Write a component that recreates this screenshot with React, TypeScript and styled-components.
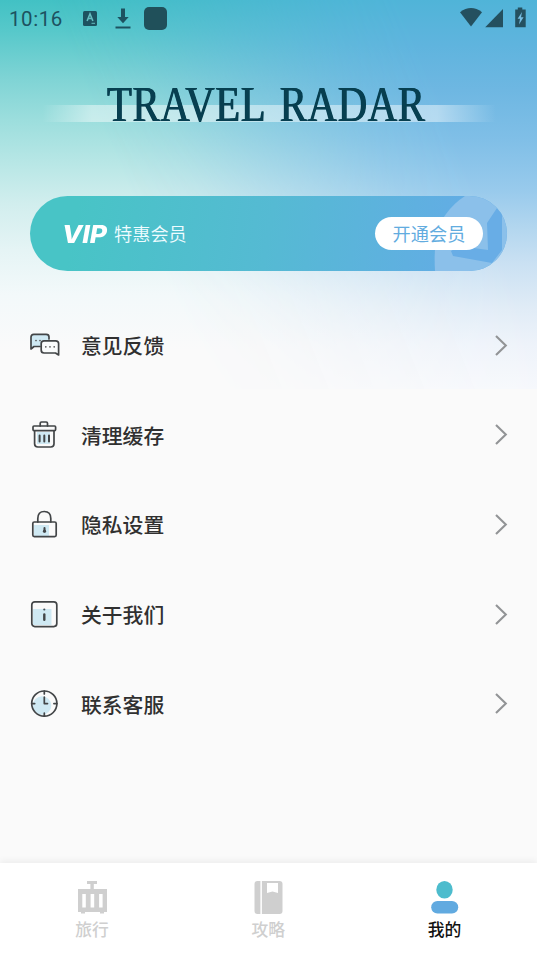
import React from "react";
import styled, { createGlobalStyle } from "styled-components";

const Global = createGlobalStyle`
  * { box-sizing: border-box; }
  html, body { margin: 0; padding: 0; background: #fafafa; }
  body { font-family: Roboto, "Noto Sans CJK SC", sans-serif; overflow: hidden; }
  svg { display: block; flex: none; }
`;

const Screen = styled.div`
  position: relative;
  isolation: isolate;
  width: 537px;
  height: 956px;
  display: flex;
  flex-direction: column;
  background: #fafafa;
  overflow: hidden;
`;

const Sky = styled.div`
  position: absolute;
  z-index: -1;
  inset: 0 0 auto 0;
  height: 389px;
  background: linear-gradient(180deg, #42c1c4 0, #56c8ca 30px, #80d4d5 80px, #9cdedd 120px, #b9e7e6 165px, #d2eeee 205px, #e5f4f5 250px, #f3f9fa 295px, #fafafa 350px);
  &::after {
    content: "";
    position: absolute;
    inset: 0;
    background: linear-gradient(180deg, #50b4d8 0, #5fb4de 45px, #6eb7e2 90px, #80bfe7 140px, #98caec 190px, #b4d7ef 230px, #cbe1f3 265px, #dfebf6 305px, #eef3fa 345px, #f6f8fc 389px);
    mask-image: linear-gradient(68deg, transparent 30%, rgba(0,0,0,.15) 40%, rgba(0,0,0,.5) 54%, rgba(0,0,0,.85) 69%, #000 80%);
  }
`;

const StatusBar = styled.header`
  height: 38px;
  display: flex;
  align-items: center;
  padding: 0 8px 2px 9px;
  color: #1d5260;
`;
const Clock = styled.span`
  width: 73px;
  font: 400 20.5px/24px Roboto, sans-serif;
  letter-spacing: 0.55px;
  padding-top: 2px;
`;
const StatusGroup = styled.div<{ $end?: boolean }>`
  display: flex;
  align-items: center;
  margin-left: ${(p) => (p.$end ? "auto" : "0")};
`;

const Brand = styled.h1`
  margin: 42px 0 0 42px;
  width: 455px;
  height: 48px;
  display: flex;
  align-items: flex-start;
  background: linear-gradient(90deg, transparent 0, rgba(255,255,255,.45) 50px, rgba(255,255,255,.45) 395px, transparent 454px) 0 25px / 455px 17px no-repeat;
`;
const BrandText = styled.span`
  margin-left: 65px;
  font: 400 50px/48px "Liberation Serif", serif;
  letter-spacing: 0.8px;
  word-spacing: 5px;
  color: #073f50;
  text-shadow: 0.6px 0 0 #073f50, -0.6px 0 0 #073f50;
  white-space: nowrap;
  transform-origin: 0 0;
  transform: scaleX(0.815);
`;

const VipCard = styled.section`
  position: relative;
  isolation: isolate;
  margin: 68px 30px 0;
  height: 75px;
  flex: none;
  border-radius: 38px;
  overflow: hidden;
  display: flex;
  align-items: center;
  padding: 0 24px 0 32px;
  background: linear-gradient(100deg, #48c4c6 10%, #55bad3 50%, #62ade4 88%);
`;
const CardArt = styled.svg`
  position: absolute;
  z-index: -1;
  right: 0;
  top: 0;
`;
const VipMark = styled.span`
  width: 52px;
  padding-top: 2px;
  font: italic 800 24px/28px Inter, sans-serif;
  color: #fff;
  transform-origin: 0 50%;
  transform: scaleX(1.1);
`;
const VipLabel = styled.span`
  flex: 1;
  font: 350 18.2px/28px "Noto Sans CJK SC", sans-serif;
  padding-bottom: 2px;
  color: #effcff;
`;
const JoinButton = styled.button`
  width: 108px;
  height: 33px;
  border: 0;
  padding: 0 0 1px;
  border-radius: 17px;
  background: #fff;
  color: #62acdf;
  font: 400 18.2px/32px "Noto Sans CJK SC", sans-serif;
`;

const Menu = styled.nav`
  margin-top: 30px;
  flex: 1;
`;
const MenuRow = styled.a`
  height: 89.6px;
  display: flex;
  align-items: center;
  padding: 0 29px 0 28px;
`;
const MenuLabel = styled.span`
  flex: 1;
  margin-left: 21px;
  padding-bottom: 1px;
  font: 500 20.8px/30px "Noto Sans CJK SC", sans-serif;
  color: #303030;
`;

const TabBar = styled.footer`
  height: 93px;
  flex: none;
  display: flex;
  padding: 16px 4px 0;
  background: #fff;
  box-shadow: 0 -2px 7px rgba(0,0,0,.06);
`;
const Tab = styled.div<{ $active?: boolean }>`
  width: 176.2px;
  display: flex;
  flex-direction: column;
  align-items: center;
  font: 500 16.8px/24px "Noto Sans CJK SC", sans-serif;
  color: ${(p) => (p.$active ? "#111" : "#cfcfcf")};
`;
const TabLabel = styled.span`
  margin-top: 2px;
`;

const stroke = { fill: "none", stroke: "#424547", strokeWidth: 1.7, strokeLinecap: "round", strokeLinejoin: "round" } as const;
const TINT = "#cfe9f3";

const FeedbackIcon = () => (
  <svg width="32" height="32" viewBox="0 0 32 32">
    <path d="M3 19V7.2Q3 4.4 5.8 4.4H18.2Q21 4.4 21 7.2V10H16Q13.2 10 13.2 13V16H6.5Z" fill={TINT} />
    <g {...stroke}>
      <path d="M21 9V7Q21 4.4 18.2 4.4H5.8Q3 4.4 3 7.2V19L6 16.5H12" />
      <path d="M16 10.8H27.6Q30.6 10.8 30.6 13.6V25L27.5 23H16Q13.2 23 13.2 20V13.6Q13.2 10.8 16 10.8Z" fill="#fafcfc" />
    </g>
    <g fill="#555"><circle cx="8" cy="10.5" r=".85" /><circle cx="12" cy="10.5" r=".85" /><circle cx="17.8" cy="16.8" r=".85" /><circle cx="22" cy="16.8" r=".85" /><circle cx="26.2" cy="16.8" r=".85" /></g>
  </svg>
);
const TrashIcon = () => (
  <svg width="32" height="32" viewBox="0 0 32 32">
    <rect x="9" y="13" width="13" height="12" fill={TINT} />
    <g {...stroke}>
      <path d="M12.2 7V4.2Q12.2 3 13.5 3H18.2Q19.5 3 19.5 4.2V7" />
      <rect x="5" y="7" width="22.6" height="4.6" rx="1" />
      <path d="M6.6 12V24.8Q6.6 28 9.8 28H22.8Q26 28 26 24.8V12" />
      <path d="M11.6 16.5V22.5M16.3 16.5V22.5M21 16.5V22.5" strokeWidth="2" />
    </g>
  </svg>
);
const LockIcon = () => (
  <svg width="32" height="32" viewBox="0 0 32 32">
    <g transform="translate(0 -1)">
      <rect x="6" y="17" width="15" height="11" fill={TINT} />
      <g {...stroke}>
        <path d="M9.8 14V10.5Q9.8 3.5 16.3 3.5T22.8 10.5V14" />
        <rect x="4.8" y="14" width="23.4" height="14.6" rx="1.5" />
        <path d="M16.5 20V23.5" strokeWidth="2" />
      </g>
      <circle cx="16.5" cy="23.2" r="1.6" fill="#424547" />
    </g>
  </svg>
);
const InfoIcon = () => (
  <svg width="32" height="32" viewBox="0 0 32 32">
    <rect x="5" y="10" width="18.5" height="16" fill={TINT} />
    <rect x="3.8" y="2.8" width="25" height="24.8" rx="3" {...stroke} />
    <circle cx="16.3" cy="10.5" r="1.1" fill="#465057" />
    <path d="M16.3 15.5V20.8" {...stroke} strokeWidth="2.4" />
  </svg>
);
const ClockIcon = () => (
  <svg width="32" height="32" viewBox="0 0 32 32">
    <circle cx="14" cy="17.5" r="9.3" fill={TINT} />
    <g {...stroke}>
      <circle cx="16.3" cy="15.6" r="12.6" />
      <path d="M16.3 3V6M16.3 25.2V28.2M3.7 15.6H6.7M25.9 15.6H28.9M16.3 9V15.6H19.5" />
    </g>
  </svg>
);
const Chevron = () => (
  <svg width="16" height="24" viewBox="0 0 16 24">
    <path d="M4 2L13.8 11.5L4 21" fill="none" stroke="#929496" strokeWidth="2.1" />
  </svg>
);

const SuitcaseIcon = () => (
  <svg width="32" height="36" viewBox="0 0 32 36">
    <path d="M11 2H21V5H17.8V10H31V33H28V34.5H24V33H9V34.5H5V33H2V10H14.4V5H11Z" fill="#cfcfcf" />
    <path d="M6.3 15H9.8V28.5H6.3ZM14.6 15H18.2V28.5H14.6ZM23.1 15H26.6V28.5H23.1Z" fill="#fff" />
  </svg>
);
const BookIcon = () => (
  <svg width="32" height="36" viewBox="0 0 32 36">
    <rect x="2.5" y="2" width="28" height="33" rx="3" fill="#cfcfcf" />
    <path d="M8.4 2H9.9V35H8.4Z" fill="#fff" />
    <path d="M15 4H26V14L20.5 12.4L15 14Z" fill="#fff" />
  </svg>
);
const PersonIcon = () => (
  <svg width="32" height="36" viewBox="0 0 32 36">
    <ellipse cx="16.5" cy="10.8" rx="8.2" ry="8.8" fill="#4dbccd" />
    <rect x="3.2" y="22" width="27" height="12.5" rx="6.2" fill="#61aae0" />
  </svg>
);

const NoticeIcons = () => (
  <svg width="86" height="26" viewBox="0 0 86 26">
    <rect x="1" y="6" width="14" height="15" rx="1.5" fill="#1d5260" />
    <path d="M5.1 16L8 8.8L10.9 16M6.2 13.5H9.8" fill="none" stroke="#65bdc0" strokeWidth="1.6" />
    <path d="M9.5 18.3H13" stroke="#65bdc0" />
    <path d="M39 3.5H43V12H46.7L41 18.2L35.3 12H39Z" fill="#1d5260" />
    <path d="M33.5 22.5H48.5" stroke="#1d5260" strokeWidth="2" />
    <rect x="62" y="2" width="23" height="23" rx="5" fill="#20505a" />
  </svg>
);
const SignalIcons = () => (
  <svg width="70" height="24" viewBox="0 0 70 24">
    <path d="M1 6.2Q12 -2 23 6.2L12 20.5Z" fill="#24505f" />
    <path d="M44 3V21.3H26.2Z" fill="#24505f" />
    <path d="M58.8 1.5H63.3V3.5H66.7V21.3H56.2V3.5H58.8Z" fill="#24505f" />
    <path d="M63 6L58.6 12.8H61L60 18.5L64.6 11.3H62Z" fill="#75bce0" />
  </svg>
);

const items = [
  { label: "意见反馈", Icon: FeedbackIcon },
  { label: "清理缓存", Icon: TrashIcon },
  { label: "隐私设置", Icon: LockIcon },
  { label: "关于我们", Icon: InfoIcon },
  { label: "联系客服", Icon: ClockIcon },
];

const tabs = [
  { label: "旅行", Icon: SuitcaseIcon },
  { label: "攻略", Icon: BookIcon },
  { label: "我的", Icon: PersonIcon, active: true },
];

export default function App() {
  return (
    <Screen>
      <Global />
      <Sky />
      <StatusBar>
        <Clock>10:16</Clock>
        <StatusGroup><NoticeIcons /></StatusGroup>
        <StatusGroup $end><SignalIcons /></StatusGroup>
      </StatusBar>
      <Brand><BrandText>TRAVEL RADAR</BrandText></Brand>
      <VipCard>
        <CardArt width="80" height="75" viewBox="0 0 80 75">
          <path d="M38 0H80V75H8C7 58 8 42 12 28L19 18Q27 7 38 0Z" fill="#8bc0ea" />
          <path d="M60 27L70 12L75 18V54L65 67L26 60L24 55L32 50L61 54Z" fill="#68ade6" />
        </CardArt>
        <VipMark>VIP</VipMark>
        <VipLabel>特惠会员</VipLabel>
        <JoinButton>开通会员</JoinButton>
      </VipCard>
      <Menu>
        {items.map(({ label, Icon }) => (
          <MenuRow key={label}>
            <Icon />
            <MenuLabel>{label}</MenuLabel>
            <Chevron />
          </MenuRow>
        ))}
      </Menu>
      <TabBar>
        {tabs.map(({ label, Icon, active }) => (
          <Tab key={label} $active={active}>
            <Icon />
            <TabLabel>{label}</TabLabel>
          </Tab>
        ))}
      </TabBar>
    </Screen>
  );
}
